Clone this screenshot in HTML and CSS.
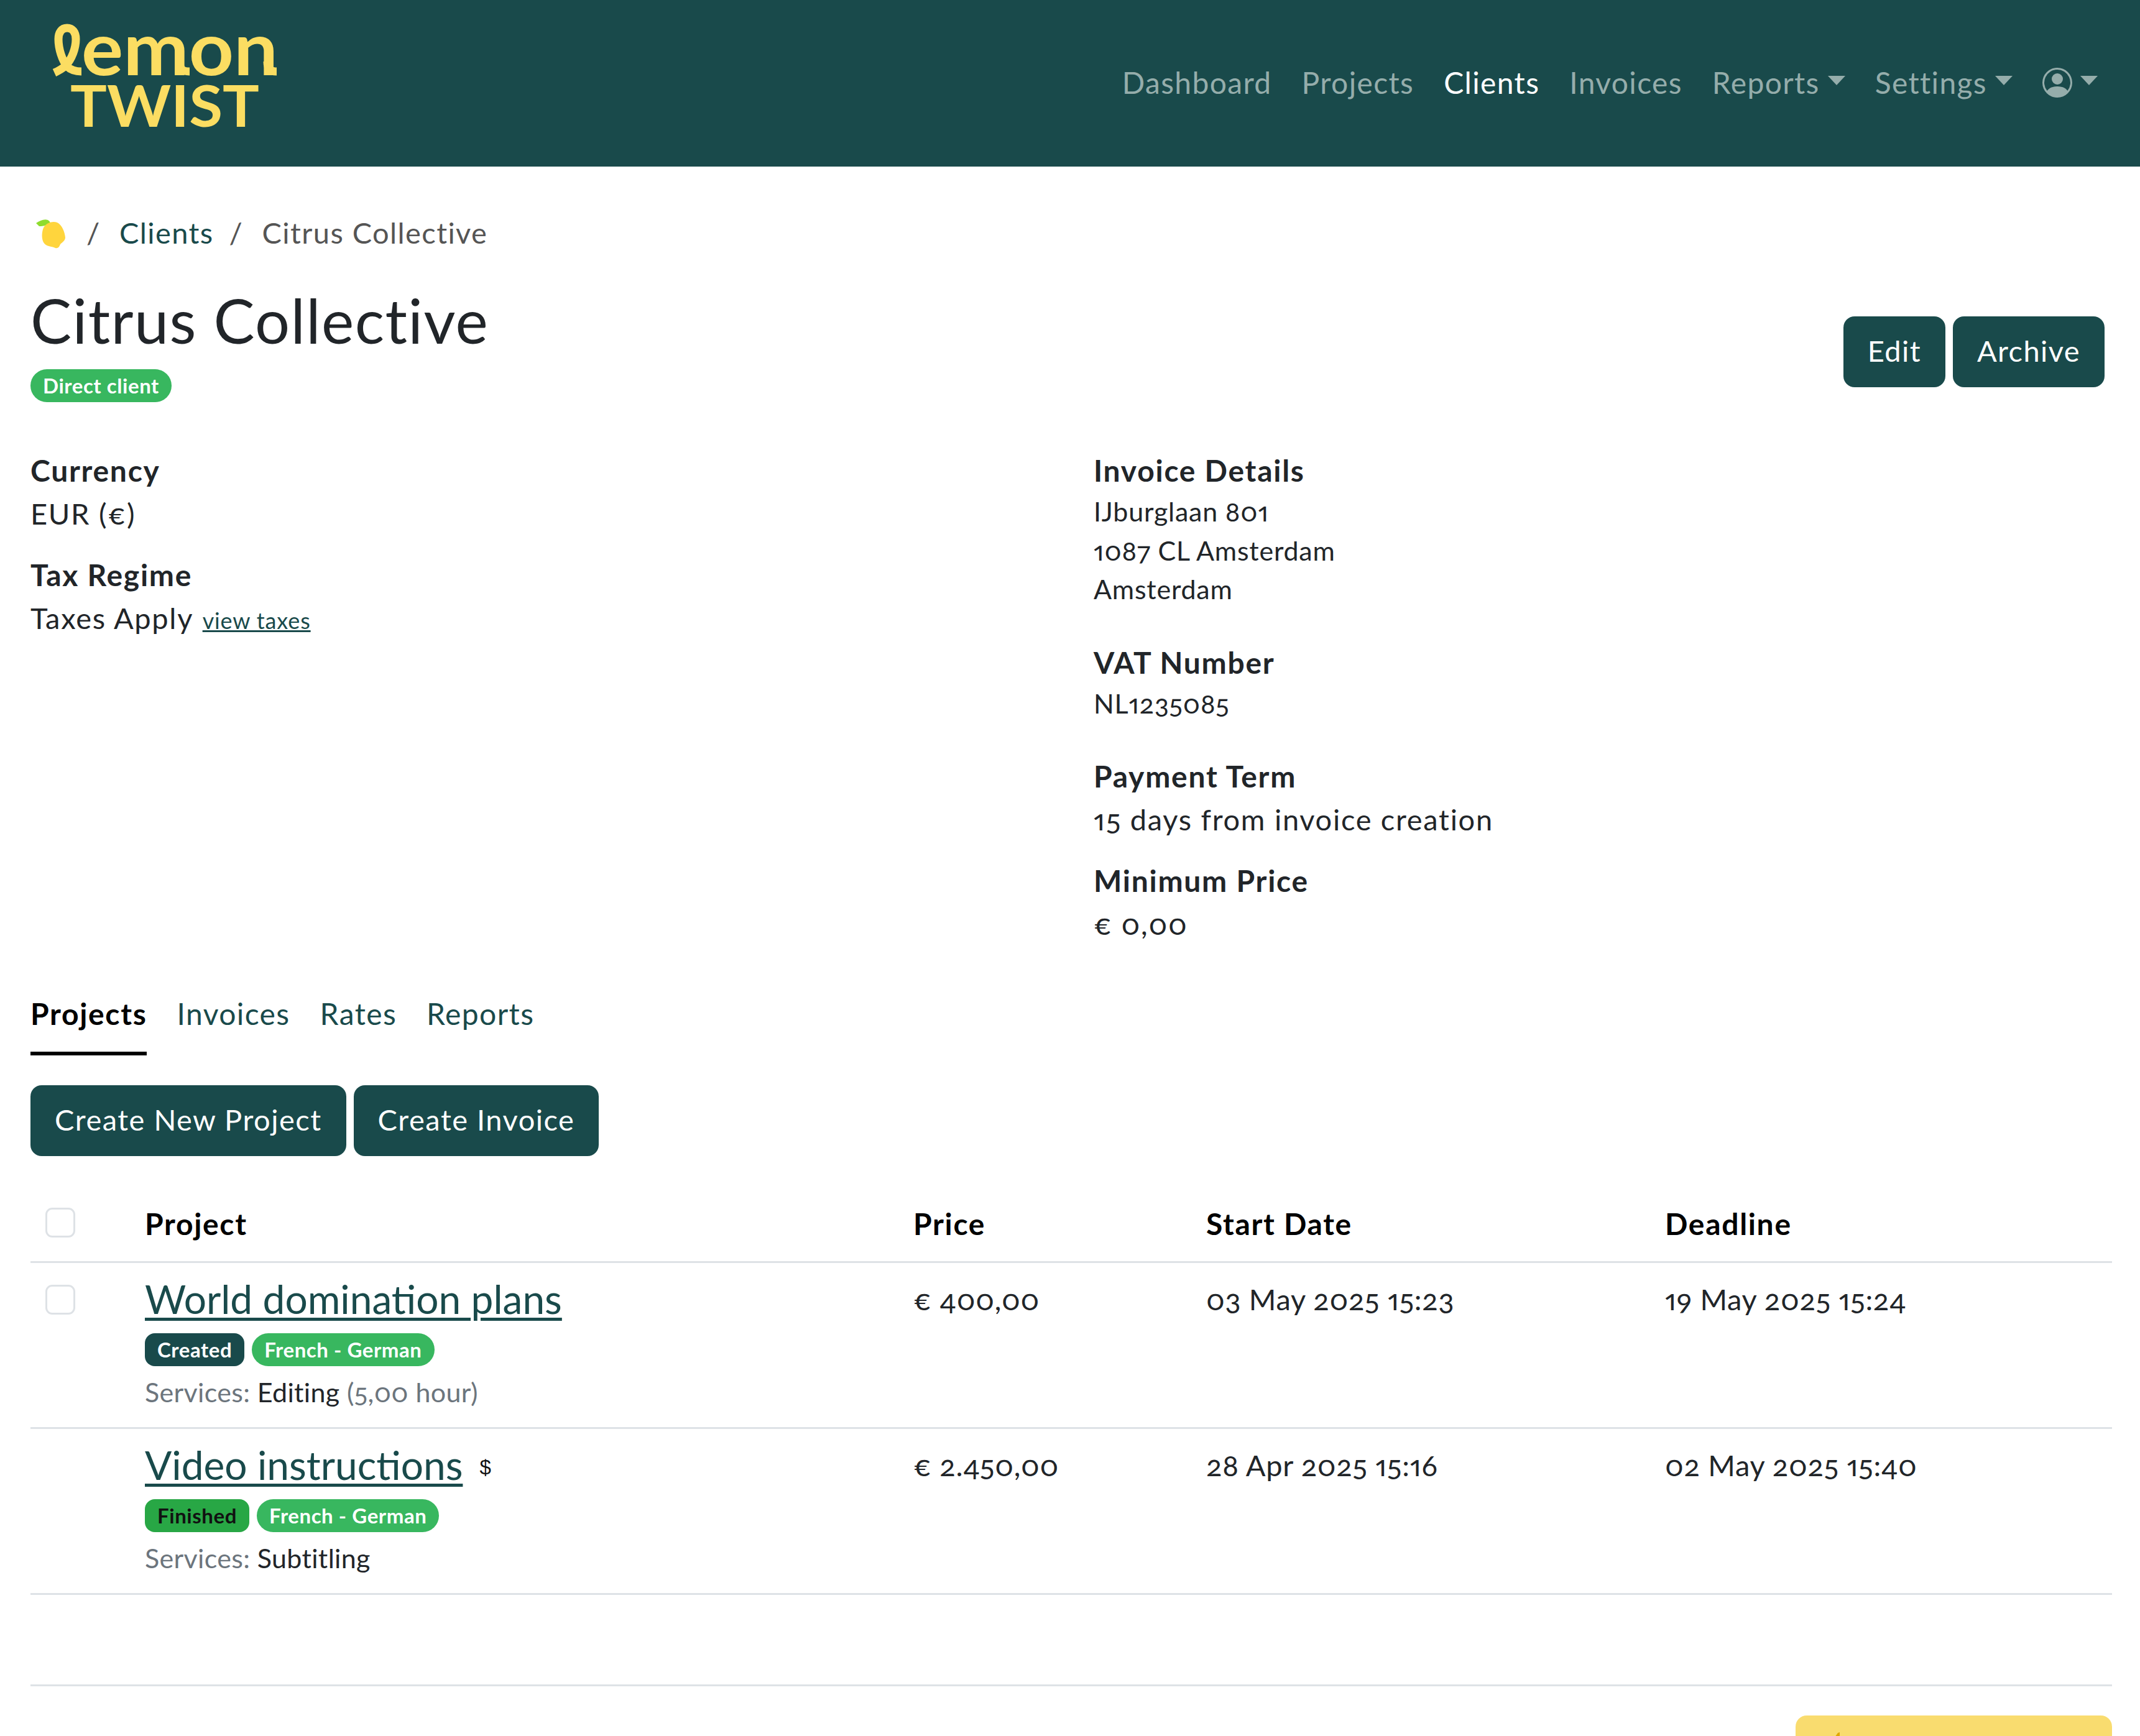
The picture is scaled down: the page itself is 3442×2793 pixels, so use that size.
FILE: index.html
```html
<!DOCTYPE html>
<html lang="en">
<head>
<meta charset="utf-8">
<title>Citrus Collective</title>
<link rel="stylesheet" href="styles.css">
</head>
<body>
<header class="topbar">
  <a class="logo" href="#" aria-label="Lemon Twist">
    <svg class="logo-svg" viewBox="0 0 361 165" width="361" height="165">
      <path class="logo-stroke" d="M3.5 78 C10 75 16 72 21 67 C32 56 38 38 38 24 C38 12 32 6 24 6 C15 6 10 13 10 24 C10 40 16 58 24 68 C30 74 38 76 47 76"/>
      <text class="logo-emon" x="47" y="82" textLength="316" lengthAdjust="spacingAndGlyphs">emon</text>
      <path class="logo-stroke" d="M205 60 C205 72 209 76 221 76"/>
      <path class="logo-stroke" d="M346 60 C346 72 350 76 361 76"/>
      <text class="logo-twist" x="29" y="165" textLength="304" lengthAdjust="spacingAndGlyphs">TWIST</text>
    </svg>
  </a>
  <nav class="mainnav">
    <a class="navlink" href="#">Dashboard</a>
    <a class="navlink" href="#">Projects</a>
    <a class="navlink active" href="#">Clients</a>
    <a class="navlink" href="#">Invoices</a>
    <a class="navlink caret" href="#">Reports</a>
    <a class="navlink caret" href="#">Settings</a>
    <a class="navlink caret" href="#" aria-label="Account">
      <svg class="user-icon" viewBox="0 0 16 16" width="48" height="48"><path d="M11 6a3 3 0 1 1-6 0 3 3 0 0 1 6 0z"/><path fill-rule="evenodd" d="M0 8a8 8 0 1 1 16 0A8 8 0 0 1 0 8zm8-7a7 7 0 0 0-5.468 11.37C3.242 11.226 4.805 10 8 10s4.757 1.225 5.468 2.37A7 7 0 0 0 8 1z"/></svg>
    </a>
  </nav>
</header>

<main class="page">
  <ol class="crumbs">
    <li class="crumb-home">
      <svg class="lemon" viewBox="0 0 48 47" width="48" height="47">
        <path class="lemon-leaf" d="M0 6 C6 2 13 -1 19 1 C22 3 24 5 21 7 C15 11 8 11 5 11 Z"/>
        <path class="lemon-body" d="M11 16 C14 6 26 2 34 5 C42 9 46 20 47 29 C47 34 42 37 39 40 C37 45 35 47 31 46 C25 43 16 44 12 37 C9 31 9 23 11 16 Z"/>
      </svg>
    </li>
    <li class="crumb-sep">/</li>
    <li><a class="crumb-link" href="#">Clients</a></li>
    <li class="crumb-sep">/</li>
    <li class="crumb-current">Citrus Collective</li>
  </ol>

  <section class="client-head">
    <div>
      <h1 class="client-title">Citrus Collective</h1>
      <span class="badge badge-pill badge-direct">Direct client</span>
    </div>
    <div class="btn-row head-actions">
      <a class="btn" href="#">Edit</a>
      <a class="btn" href="#">Archive</a>
    </div>
  </section>

  <section class="info-grid">
    <div>
      <h2 class="label">Currency</h2>
      <p class="value gap-l">EUR (€)</p>
      <h2 class="label">Tax Regime</h2>
      <p class="value">Taxes Apply <a class="mini-link" href="#">view taxes</a></p>
    </div>
    <div>
      <h2 class="label">Invoice Details</h2>
      <address class="small-block first">IJburglaan 801<br>1087 CL Amsterdam<br>Amsterdam</address>
      <h2 class="label">VAT Number</h2>
      <p class="small-block first">NL1235085</p>
      <h2 class="label">Payment Term</h2>
      <p class="value gap-l">15 days from invoice creation</p>
      <h2 class="label">Minimum Price</h2>
      <p class="value">€ 0,00</p>
    </div>
  </section>

  <nav class="tabs">
    <a class="tab tab-active" href="#">Projects</a>
    <a class="tab" href="#">Invoices</a>
    <a class="tab" href="#">Rates</a>
    <a class="tab" href="#">Reports</a>
  </nav>

  <div class="btn-row tab-actions">
    <a class="btn" href="#">Create New Project</a>
    <a class="btn" href="#">Create Invoice</a>
  </div>

  <table class="projects">
    <colgroup>
      <col class="c-check"><col class="c-project"><col class="c-price"><col class="c-start"><col>
    </colgroup>
    <thead>
      <tr>
        <th><span class="check head-check"></span></th>
        <th>Project</th>
        <th>Price</th>
        <th>Start Date</th>
        <th>Deadline</th>
      </tr>
    </thead>
    <tbody>
      <tr>
        <td><span class="check"></span></td>
        <td>
          <div class="project-line"><a class="project-link" href="#">World domination plans</a></div>
          <div class="badge-row"><span class="badge badge-created">Created</span><span class="badge badge-pill badge-direct">French - German</span></div>
          <div class="services"><span class="muted">Services:</span> Editing <span class="muted">(5,00 hour)</span></div>
        </td>
        <td>€ 400,00</td>
        <td>03 May 2025 15:23</td>
        <td>19 May 2025 15:24</td>
      </tr>
      <tr>
        <td></td>
        <td>
          <div class="project-line"><a class="project-link" href="#">Video instructions</a><span class="dollar">$</span></div>
          <div class="badge-row"><span class="badge badge-finished">Finished</span><span class="badge badge-pill badge-direct">French - German</span></div>
          <div class="services"><span class="muted">Services:</span> Subtitling</div>
        </td>
        <td>€ 2.450,00</td>
        <td>28 Apr 2025 15:16</td>
        <td>02 May 2025 15:40</td>
      </tr>
    </tbody>
  </table>

  <hr class="rule">

  <div class="widget-row">
    <div class="widget">
      <span class="widget-back"></span>
      <svg class="widget-tick" viewBox="0 0 10 8" width="10" height="8"><path d="M1 8 L6 1 L9 0 L9 8 Z"/></svg>
    </div>
  </div>
</main>
</body>
</html>
```
FILE: styles.css
```css
html, body {
  margin: 0;
  height: 2793px;
  overflow: hidden;
  background: #fff;
}
body {
  font-family: "Lato", "Open Sans", sans-serif;
  font-size: 47px;
  line-height: 53px;
  letter-spacing: .03em;
  color: #212529;
  font-feature-settings: "onum" 1, "pnum" 1;
}
a { text-decoration: none; }

.topbar {
  height: 268px;
  background: #194a4b;
  display: flex;
  justify-content: space-between;
  align-items: center;
  padding: 0 68px 0 84px;
  box-sizing: border-box;
}
.logo { display: block; height: 165px; margin-top: -25px; }
.logo-svg { display: block; overflow: visible; }
.logo-stroke { fill: none; stroke: #fbdd62; stroke-width: 13; }
.logo-emon, .logo-twist { fill: #fbdd62; font-family: "Lato", sans-serif; font-weight: 700; letter-spacing: 0; }
.logo-emon { font-size: 118px; }
.logo-twist { font-size: 92px; }

.mainnav { display: flex; gap: 48px; align-items: center; margin-top: -3px; }
.navlink { color: #95adab; display: flex; align-items: center; font-size: 48px; letter-spacing: .028em; }
.navlink.active { color: #fff; }
.navlink.caret::after {
  content: "";
  margin-left: 13px;
  margin-top: -6px;
  border-top: 15px solid currentColor;
  border-left: 14.5px solid transparent;
  border-right: 14.5px solid transparent;
}
.user-icon { fill: currentColor; display: block; margin-top: 0; }

.page { padding: 82px 45px 0 49px; }

.crumbs {
  list-style: none;
  margin: 0;
  padding: 0 0 4px;
  box-sizing: border-box;
  display: flex;
  align-items: center;
  height: 53px;
}
.crumb-home { width: 90px; padding: 4px 0 0 9px; box-sizing: border-box; display: flex; }
.crumb-sep { color: #555; width: 53px; }
.crumb-sep:nth-child(4) { margin-left: 25px; }
.crumb-link { color: #194a4b; }
.crumb-current { color: #555; }
.lemon-leaf { fill: #8fdc2f; }
.lemon-body { fill: #ffd53d; }

.client-head {
  display: flex;
  justify-content: space-between;
  margin-top: 59px;
}
.client-title {
  margin: 0 0 27px;
  font-size: 99px;
  line-height: 105px;
  font-weight: 400;
  letter-spacing: .014em;
}
.badge {
  display: inline-block;
  height: 53px;
  line-height: 53px;
  padding: 0 20px;
  border-radius: 16px;
  font-size: 33px;
  font-weight: 700;
  letter-spacing: .017em;
  color: #fff;
  box-sizing: border-box;
  vertical-align: top;
}
.badge-pill { border-radius: 27px; }
.badge-direct { background: #38b75f; }
.badge-created { background: #194a4b; }
.badge-finished { background: #28a745; color: #111; }

.btn-row { display: flex; gap: 12px; }
.head-actions { margin: 47px 12px 0 0; }
.btn {
  height: 114px;
  line-height: 110px;
  padding: 0 39px;
  background: #194a4b;
  color: #fff;
  border-radius: 18px;
  white-space: nowrap;
}
.tab-actions .btn { letter-spacing: .032em; }

.info-grid {
  display: grid;
  grid-template-columns: 1710px 1fr;
  margin-top: 83px;
}
.label {
  margin: 0;
  font-size: 48px;
  line-height: 53px;
  font-weight: 700;
  letter-spacing: .036em;
}
.value { margin: 17px 0 45px; letter-spacing: .036em; }
.value:last-child { margin-bottom: 2px; }
.small-block {
  margin: 9px 0 59px;
  font-size: 43px;
  line-height: 62.5px;
  letter-spacing: .018em;
  font-style: normal;
}
.mini-link { color: #194a4b; font-size: 36px; letter-spacing: .024em; margin-left: 2px; text-decoration: underline; }

.tabs { display: flex; gap: 48px; margin-top: 91px; font-size: 48px; }
.tab { color: #194a4b; padding-bottom: 35px; border-bottom: 6px solid transparent; margin-top: -2px; }
.tab-active { color: #000; font-weight: 700; letter-spacing: .035em; border-bottom-color: #000; }

.tab-actions { margin-top: 48px; }

.projects {
  width: 100%;
  margin-top: 48px;
  border-collapse: collapse;
  table-layout: fixed;
  letter-spacing: .014em;
}
.c-check { width: 184px; }
.c-project { width: 1236px; }
.c-price { width: 471px; }
.c-start { width: 738px; }
.projects th {
  text-align: left;
  padding: 34px 0 34px;
  font-size: 48px;
  font-weight: 700;
  color: #000;
  letter-spacing: .035em;
  border-bottom: 3px solid #dee2e6;
  vertical-align: top;
}
.projects td {
  padding: 23px 0 30px;
  vertical-align: top;
  line-height: 70px;
  border-bottom: 3px solid #dee2e6;
}
.check {
  display: block;
  width: 48px;
  height: 48px;
  margin: 12px 0 0 24px;
  box-sizing: border-box;
  border: 3px solid #dee2e6;
  border-radius: 11px;
}
.head-check { margin-top: 1px; }
.project-line { font-size: 64px; line-height: 70px; height: 70px; letter-spacing: 0; }
.project-link {
  color: #194a4b;
  text-decoration: underline;
  text-decoration-thickness: 5px;
  text-underline-offset: 6px;
}
.project-line .dollar { font-family: "Liberation Sans", sans-serif; font-size: 33px; color: #111; margin-left: 27px; letter-spacing: 0; vertical-align: 9px; line-height: 1; }
.badge-row { display: flex; gap: 12px; margin-top: 20px; }
.services { margin-top: 15px; line-height: 53px; font-size: 43px; letter-spacing: .008em; }
.muted { color: #6c757d; }

.rule {
  margin: 144px 0 0;
  border: 0;
  height: 3px;
  background: #dee2e6;
}
.widget-row { display: flex; justify-content: flex-end; margin-top: 47px; }
.widget {
  position: relative;
  width: 509px;
  height: 120px;
  background: #f9dc6f;
  border-radius: 18px 18px 0 0;
}
.widget-back {
  position: absolute;
  z-index: -1;
  right: -13px;
  top: 13px;
  width: 40px;
  height: 100px;
  background: #194a4b;
  border-radius: 0 18px 0 0;
}
.widget-tick { position: absolute; left: 62px; top: 27px; fill: #e0a800; }
```
